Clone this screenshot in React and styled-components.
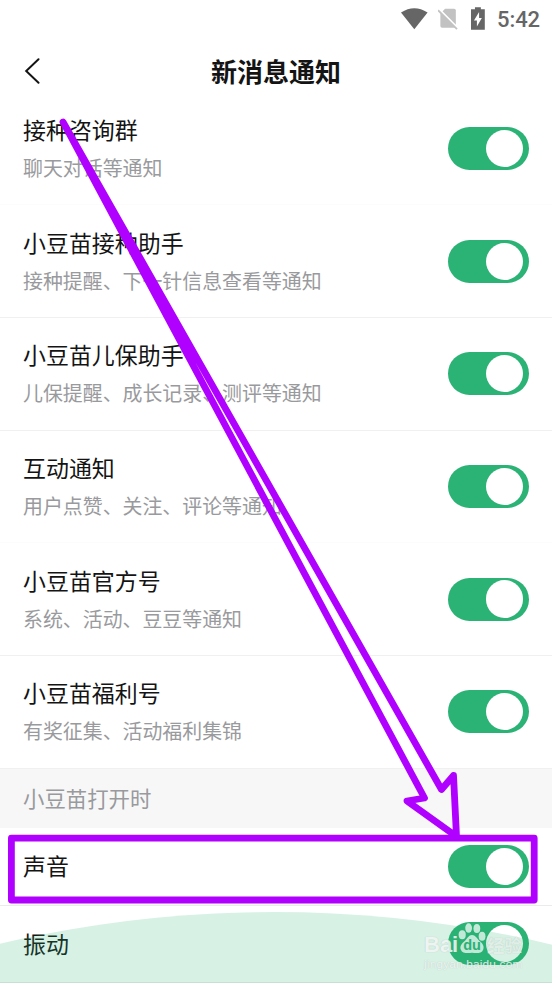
import React from "react";
import styled, { createGlobalStyle } from "styled-components";

const notices = [
	{ title: "接种咨询群", desc: "聊天对话等通知", line: "#fcfcfc" },
	{ title: "小豆苗接种助手", desc: "接种提醒、下一针信息查看等通知", line: "#f0f0f0" },
	{ title: "小豆苗儿保助手", desc: "儿保提醒、成长记录、测评等通知", line: "#f0f0f0" },
	{ title: "互动通知", desc: "用户点赞、关注、评论等通知", line: "#fcfcfc" },
	{ title: "小豆苗官方号", desc: "系统、活动、豆豆等通知", line: "#f0f0f0" },
	{ title: "小豆苗福利号", desc: "有奖征集、活动福利集锦", line: "#f0f0f0" },
];

export default function App() {
	return (
		<Screen>
			<GlobalStyle />
			<StatusBar>
				<svg width="27" height="22" viewBox="0 0 27 22">
					<path d="M0 4.3Q13.5-4.3 27 4.3L13.5 21.5Z" fill="#666" />
				</svg>
				<svg width="21" height="22" viewBox="0 0 21 22">
					<path d="M7.2 .5h9.2q1.7 0 1.7 1.7V20H4.2q-1.8 0-1.8-1.8V5.5Z" fill="#c2c2c2" />
					<path d="M.5 .5L21 21" stroke="#fff" strokeWidth="2.2" />
					<path d="M0 2L19.3 21.3" stroke="#c2c2c2" strokeWidth="1.8" />
				</svg>
				<svg width="14" height="23" viewBox="0 0 14 23">
					<path d="M4 0h6v2h4v21H0V2h4Z" fill="#666" />
					<path d="M8.2 5L3 13.5h3V19.5L11 11H8.2Z" fill="#fff" />
				</svg>
				<Time>5:42</Time>
			</StatusBar>
			<Header>
				<Back width="16" height="26" viewBox="0 0 16 26">
					<path d="M14.5 1.3L2.2 13L14.5 24.7" />
				</Back>
				<HeaderTitle>新消息通知</HeaderTitle>
			</Header>
			{notices.map((item) => (
				<Row key={item.title} $line={item.line}>
					<div>
						<Title>{item.title}</Title>
						<Desc>{item.desc}</Desc>
					</div>
					<Toggle />
				</Row>
			))}
			<Section>小豆苗打开时</Section>
			<Row $short $line="#ebebeb">
				<Title>声音</Title>
				<Toggle />
			</Row>
			<Row $short $line="#ebebeb">
				<Title>振动</Title>
				<Toggle />
			</Row>
			<Hill />
			<Watermark>
				<Brand>
					<Bai>Bai</Bai>
					<Paw width="28" height="31" viewBox="0 0 28 32">
						<ellipse cx="3.9" cy="12.2" rx="3.7" ry="4.7" />
						<ellipse cx="10.5" cy="5.2" rx="3.5" ry="4.9" />
						<ellipse cx="19" cy="5.7" rx="3.5" ry="4.7" />
						<ellipse cx="24.4" cy="13.7" rx="3.5" ry="4.7" />
						<path d="M14 12.5C17.5 12.5 19 16 21.5 18.3C25 21 27 24 25.5 27.5C24 31.5 19 31 14 30.7C9 31 4 31.5 2.5 27.5C1 24 3.5 21 6.8 18.3C9.5 16 10.5 12.5 14 12.5Z" />
						<text x="14" y="27.5" textAnchor="middle">du</text>
					</Paw>
					<Cn>经验</Cn>
				</Brand>
				<Site>jingyan.baidu.com</Site>
			</Watermark>
			<Marks width="552" height="983" viewBox="0 0 552 983">
				<rect x="11.4" y="838.2" width="522.8" height="61.8" />
				<path d="M63 122L424.5 798L407 801L456.5 836.5L453.5 775.5L441.5 789.5Z" />
			</Marks>
		</Screen>
	);
}

const GlobalStyle = createGlobalStyle`
	body {
		margin: 0;
		background: #fff;
	}
`;
const Screen = styled.div`
	position: relative;
	width: 552px;
	height: 983px;
	overflow: hidden;
	background: #fff;
	color: #141414;
	font-family: "Noto Sans CJK SC", sans-serif;
`;
const StatusBar = styled.div`
	display: flex;
	align-items: center;
	height: 37px;
	padding: 0 12px 0 401px;
	box-sizing: border-box;

	svg:nth-child(2) {
		margin-left: 10px;
	}
	svg:nth-child(3) {
		margin-left: 13px;
	}
`;
const Time = styled.div`
	margin-left: 12px;
	padding-top: 1px;
	color: #666;
	font-family: Roboto, sans-serif;
	font-size: 22px;
	letter-spacing: -0.1px;
	font-weight: 500;
	white-space: nowrap;
`;
const Header = styled.div`
	display: grid;
	grid-template-columns: 100px 1fr 100px;
	align-items: center;
	height: 55.7px;
	padding-top: 13px;
	box-sizing: border-box;
`;
const Back = styled.svg`
	margin-left: 24px;
	fill: none;
	stroke: #141414;
	stroke-width: 2;
	stroke-linecap: round;
`;
const HeaderTitle = styled.div`
	padding-bottom: 1px;
	text-align: center;
	font-size: 26px;
	line-height: 40px;
	font-weight: 700;
`;
const Row = styled.div`
	display: flex;
	align-items: center;
	justify-content: space-between;
	height: ${(p) => (p.$short ? "77.4px" : "112.66px")};
	padding: 0 23px;
	box-sizing: border-box;
	border-bottom: 1px solid ${(p) => p.$line};
`;
const Title = styled.div`
	padding-bottom: 2px;
	font-size: 22.95px;
	line-height: 36px;
`;
const Desc = styled.div`
	color: #999a9d;
	font-size: 19.92px;
	line-height: 37px;
`;
const Toggle = styled.div`
	display: flex;
	align-items: center;
	justify-content: flex-end;
	width: 81px;
	height: 43px;
	padding-right: 5.7px;
	box-sizing: border-box;
	border-radius: 22px;
	background: #2bb275;

	&::after {
		content: "";
		width: 37.3px;
		height: 37.3px;
		border-radius: 50%;
		background: #fff;
	}
`;
const Section = styled.div`
	height: 59.5px;
	padding: 0 23px;
	box-sizing: border-box;
	background: #f7f7f7;
	color: #999a9d;
	font-size: 21.4px;
	line-height: 57px;
`;
const Hill = styled.div`
	position: absolute;
	left: -926px;
	top: 912px;
	width: 2400px;
	height: 2400px;
	border-radius: 50%;
	background: rgba(43, 178, 117, 0.19);
`;
const Watermark = styled.div`
	position: absolute;
	left: 424px;
	top: 923px;
	width: 104px;
	color: #f1f5f3;
	text-shadow: 0 0 1px rgba(110, 130, 120, 0.4);
	opacity: 0.88;
`;
const Brand = styled.div`
	display: flex;
	height: 34px;
	font-weight: 700;
`;
const Bai = styled.span`
	width: 34px;
	margin-top: 10px;
	font-family: "Liberation Sans", sans-serif;
	font-size: 22px;
	line-height: 24px;
`;
const Paw = styled.svg`
	flex: none;
	fill: rgba(255, 255, 255, 0.82);
	text-shadow: none;

	text {
		fill: #2bb275;
		font-family: "Liberation Sans", sans-serif;
		font-size: 15px;
		font-weight: 700;
	}
`;
const Cn = styled.span`
	margin: 12px 0 0 1px;
	color: #e3efe9;
	font-size: 17.5px;
	line-height: 20px;
`;
const Site = styled.div`
	font-family: "Liberation Sans", sans-serif;
	font-size: 11.8px;
	line-height: 14px;
	letter-spacing: 0.2px;
	white-space: nowrap;
`;
const Marks = styled.svg`
	position: absolute;
	left: 0;
	top: 0;
	fill: none;
	stroke: #b000ff;
	stroke-width: 6.8;
	stroke-linejoin: round;
`;
